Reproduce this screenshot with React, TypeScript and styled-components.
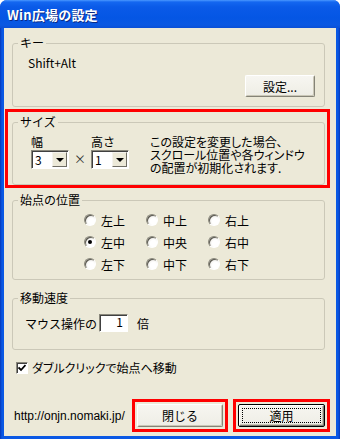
import styled, { createGlobalStyle } from "styled-components";

const GlobalStyle = createGlobalStyle`
  html, body {
    margin: 0;
    padding: 0;
    background: #fff;
  }
  body {
    font-family: "Noto Sans CJK JP", "Noto Sans", sans-serif;
  }
`;

const Window = styled.div`
  width: 340px;
  height: 439px;
  display: flex;
  flex-direction: column;
  border-radius: 7px 7px 0 0;
  overflow: hidden;
  background: linear-gradient(to right, #0737b8 0, #0a58e4 2px, #0a58e4 calc(100% - 2px), #0737b8 100%);
`;

const TitleBar = styled.div`
  flex: none;
  height: 28px;
  display: flex;
  align-items: center;
  padding-left: 7px;
  background: linear-gradient(#4a98ff 0, #1467f0 2px, #0a5ae8 7px, #0556e4 18px, #0a58e2 25px, #0a4fd6 28px);
  color: #fff;
  font-size: 13px;
  font-weight: bold;
  text-shadow: 1px 1px #0b2a86;
  letter-spacing: 0.2px;
`;

const Client = styled.div`
  flex: 1;
  min-width: 0;
  margin: 0 4px 4px;
  display: flex;
  flex-direction: column;
  background: #ece9d8;
  color: #000;
  font-size: 12px;
`;

const Group = styled.fieldset<{ $top: number; $side?: boolean }>`
  margin: ${(p) => p.$top}px ${(p) => (p.$side ? 0 : 11)}px 0 ${(p) => (p.$side ? 0 : 8)}px;
  padding: 0;
  min-width: 0;
  border: 1px solid #cbc8b8;
  border-radius: 3px;
`;

const Legend = styled.legend`
  margin-left: 5px;
  padding: 0 2px;
  font-size: 12px;
  line-height: 14px;
`;

const KeyBody = styled.div`
  display: flex;
  flex-direction: column;
  align-items: flex-start;
  padding: 6px 9px 9px 15px;
`;

const Line = styled.div`
  line-height: 14px;
`;

const Button = styled.button<{ $w: number; $h: number }>`
  width: ${(p) => p.$w}px;
  height: ${(p) => p.$h}px;
  margin: 0;
  padding: 0;
  display: flex;
  align-items: center;
  justify-content: center;
  box-sizing: border-box;
  font-family: inherit;
  font-size: 12px;
  color: #000;
  background: linear-gradient(#f7f6f1, #eeede5);
  border: 1px solid;
  border-color: #ffffff #858377 #858377 #ffffff;
  box-shadow: inset -1px -1px #cac7b7;
  border-radius: 2px;
`;

const SetButton = styled(Button)`
  align-self: flex-end;
  margin-top: 5px;
`;

const DefaultButton = styled(Button)`
  padding: 3px;
  border: 1px solid #000;
  box-shadow: inset 1px 1px #fff, inset -1px -1px #7f7d72, inset -2px -2px #c8c5b5;
`;

const FocusRing = styled.span`
  width: 100%;
  height: 100%;
  box-sizing: border-box;
  display: flex;
  align-items: center;
  justify-content: center;
  border: 1px dotted #000;
`;

const Highlight = styled.div<{ $pad: string }>`
  flex: none;
  border: 3px solid #ff0000;
  padding: ${(p) => p.$pad};
`;

const SizeHighlight = styled(Highlight)`
  margin: 2px 6px 0 1px;
`;

const SizeBody = styled.div`
  display: flex;
  align-items: flex-start;
  padding: 6px 0 10px 18px;
`;

const Field = styled.div`
  display: flex;
  flex-direction: column;
  gap: 1px;
`;

const Times = styled.span`
  margin: 17px 5px 0 5px;
  font-size: 12px;
  line-height: 14px;
  color: #333;
`;

const Combo = styled.div`
  width: 38px;
  height: 19px;
  box-sizing: border-box;
  display: flex;
  align-items: stretch;
  padding: 1px;
  background: #fff;
  border: 1px solid;
  border-color: #8a887c #ffffff #ffffff #8a887c;
  box-shadow: inset 1px 1px #404040;
`;

const ComboValue = styled.span`
  flex: 1;
  padding-left: 2px;
  line-height: 15px;
`;

const DropButton = styled.span`
  width: 15px;
  box-sizing: border-box;
  display: flex;
  align-items: center;
  justify-content: center;
  background: #ece9d8;
  border: 1px solid;
  border-color: #f4f3ee #6f6d64 #6f6d64 #f4f3ee;
`;

const Arrow = styled.span`
  width: 0;
  height: 0;
  border-left: 4px solid transparent;
  border-right: 4px solid transparent;
  border-top: 4px solid #000;
`;

const Note = styled.p`
  margin: 0 0 0 21px;
  line-height: 13px;
  font-feature-settings: "palt";
`;

const RadioGrid = styled.div`
  display: grid;
  grid-template-columns: repeat(3, 62px);
  grid-auto-rows: 22px;
  padding: 2px 0 4px 71px;
`;

const RadioItem = styled.label`
  display: flex;
  align-items: center;
  gap: 5px;
`;

const RadioCircle = styled.span<{ $on?: boolean }>`
  width: 12px;
  height: 12px;
  box-sizing: border-box;
  border-radius: 50%;
  display: flex;
  align-items: center;
  justify-content: center;
  border: 1px solid;
  border-color: #8a887c #ffffff #ffffff #8a887c;
  box-shadow: inset 1px 1px #5a5850;
  background: radial-gradient(circle at 65% 65%, #ffffff 0, #ffffff 35%, #dcdad0 100%);

  &::after {
    content: "";
    width: 4px;
    height: 4px;
    border-radius: 50%;
    background: ${(p) => (p.$on ? "#000" : "transparent")};
  }
`;

const SpeedBody = styled.div`
  display: flex;
  align-items: center;
  padding: 9px 0 17px 12px;
`;

const NumberBox = styled.div`
  width: 29px;
  height: 18px;
  box-sizing: border-box;
  margin: 0 9px 0 2px;
  padding-right: 4px;
  text-align: right;
  line-height: 14px;
  background: #fff;
  border: 1px solid;
  border-color: #8a887c #ffffff #ffffff #8a887c;
  box-shadow: inset 1px 1px #404040;
`;

const CheckRow = styled.label`
  display: flex;
  align-items: center;
  gap: 4px;
  margin: 11px 0 0 12px;
  line-height: 14px;
  font-feature-settings: "palt";
`;

const CheckBox = styled.span`
  width: 12px;
  height: 12px;
  box-sizing: border-box;
  display: flex;
  align-items: center;
  justify-content: center;
  background: #fff;
  border: 1px solid;
  border-color: #8a887c #ffffff #ffffff #8a887c;
  box-shadow: inset 1px 1px #404040;
`;

const Footer = styled.div`
  display: flex;
  align-items: center;
  margin: 24px 6px 4px 10px;
`;

const Url = styled.span`
  flex: 1;
  min-width: 0;
  font-family: "Liberation Sans", Arial, sans-serif;
  font-size: 12px;
`;

const FooterHighlight = styled(Highlight)`
  & + & {
    margin-left: 5px;
  }
`;

const positions = [
  ["左上", "中上", "右上"],
  ["左中", "中央", "右中"],
  ["左下", "中下", "右下"],
];

export default function App() {
  return (
    <>
      <GlobalStyle />
      <Window>
        <TitleBar>Win広場の設定</TitleBar>
        <Client>
          <Group $top={8}>
            <Legend>キー</Legend>
            <KeyBody>
              <Line>Shift+Alt</Line>
              <SetButton $w={70} $h={22}>設定...</SetButton>
            </KeyBody>
          </Group>

          <SizeHighlight $pad="3px 2px 0 4px">
            <Group $top={0} $side>
              <Legend>サイズ</Legend>
              <SizeBody>
                <Field>
                  <Line>幅</Line>
                  <Combo>
                    <ComboValue>3</ComboValue>
                    <DropButton>
                      <Arrow />
                    </DropButton>
                  </Combo>
                </Field>
                <Times>×</Times>
                <Field>
                  <Line>高さ</Line>
                  <Combo>
                    <ComboValue>1</ComboValue>
                    <DropButton>
                      <Arrow />
                    </DropButton>
                  </Combo>
                </Field>
                <Note>
                  この設定を変更した場合、
                  <br />
                  スクロール位置や各ウィンドウ
                  <br />
                  の配置が初期化されます.
                </Note>
              </SizeBody>
            </Group>
          </SizeHighlight>

          <Group $top={5}>
            <Legend>始点の位置</Legend>
            <RadioGrid>
              {positions.flat().map((label) => (
                <RadioItem key={label}>
                  <RadioCircle $on={label === "左中"} />
                  {label}
                </RadioItem>
              ))}
            </RadioGrid>
          </Group>

          <Group $top={11}>
            <Legend>移動速度</Legend>
            <SpeedBody>
              マウス操作の
              <NumberBox>1</NumberBox>
              倍
            </SpeedBody>
          </Group>

          <CheckRow>
            <CheckBox>
              <svg width="8" height="8" viewBox="0 0 8 8">
                <path d="M0.5 3.5 L3 6 L7.5 1" fill="none" stroke="#000" strokeWidth="1.8" />
              </svg>
            </CheckBox>
            ダブルクリックで始点へ移動
          </CheckRow>

          <Footer>
            <Url>http://onjn.nomaki.jp/</Url>
            <FooterHighlight $pad="2px">
              <Button $w={86} $h={23}>閉じる</Button>
            </FooterHighlight>
            <FooterHighlight $pad="2px">
              <DefaultButton $w={87} $h={23}>
                <FocusRing>適用</FocusRing>
              </DefaultButton>
            </FooterHighlight>
          </Footer>
        </Client>
      </Window>
    </>
  );
}
